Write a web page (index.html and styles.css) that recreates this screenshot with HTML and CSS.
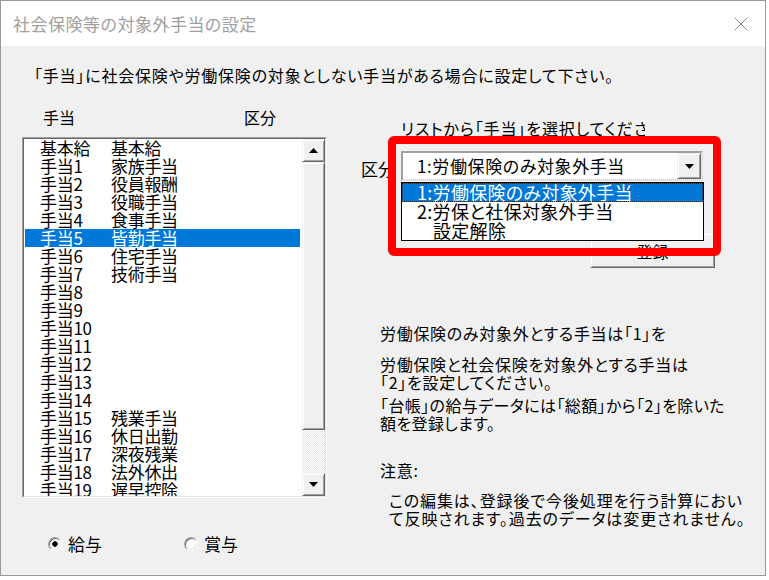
FILE: index.html
```html
<!DOCTYPE html>
<html lang="ja">

<head>
    <meta charset="UTF-8">
    <title>社会保険等の対象外手当の設定</title>
    <link rel="stylesheet" href="styles.css">
</head>

<body>

    <div class="window">
        <!-- Barra de título -->
        <div class="titlebar">
            <span class="title">社会保険等の対象外手当の設定</span>
            <svg class="close" width="16" height="16" viewBox="0 0 16 16">
                <path d="M1.5 1.5L14.5 14.5M14.5 1.5L1.5 14.5" stroke="#8a8a8a" stroke-width="1" fill="none" />
            </svg>
        </div>

        <div class="content">
            <p class="intro">「手当」に社会保険や労働保険の対象としない手当がある場合に設定して下さい。</p>

            <div class="main">
                <!-- Coluna esquerda: lista de 手当 -->
                <div class="left">
                    <div class="heads"><span class="head-1">手当</span><span>区分</span></div>
                    <div class="listbox">
                        <div class="listbox-inner">
                            <div class="items">
                                <div class="item"><span class="c1">基本給</span><span>基本給</span></div>
                                <div class="item"><span class="c1">手当1</span><span>家族手当</span></div>
                                <div class="item"><span class="c1">手当2</span><span>役員報酬</span></div>
                                <div class="item"><span class="c1">手当3</span><span>役職手当</span></div>
                                <div class="item"><span class="c1">手当4</span><span>食事手当</span></div>
                                <div class="item selected"><span class="c1">手当5</span><span>皆勤手当</span></div>
                                <div class="item"><span class="c1">手当6</span><span>住宅手当</span></div>
                                <div class="item"><span class="c1">手当7</span><span>技術手当</span></div>
                                <div class="item"><span class="c1">手当8</span></div>
                                <div class="item"><span class="c1">手当9</span></div>
                                <div class="item"><span class="c1">手当10</span></div>
                                <div class="item"><span class="c1">手当11</span></div>
                                <div class="item"><span class="c1">手当12</span></div>
                                <div class="item"><span class="c1">手当13</span></div>
                                <div class="item"><span class="c1">手当14</span></div>
                                <div class="item"><span class="c1">手当15</span><span>残業手当</span></div>
                                <div class="item"><span class="c1">手当16</span><span>休日出勤</span></div>
                                <div class="item"><span class="c1">手当17</span><span>深夜残業</span></div>
                                <div class="item"><span class="c1">手当18</span><span>法外休出</span></div>
                                <div class="item"><span class="c1">手当19</span><span>遅早控除</span></div>
                            </div>
                            <div class="scrollbar">
                                <div class="sb-btn">
                                    <svg width="9" height="5" viewBox="0 0 9 5"><path d="M4.5 0L9 5H0Z" fill="#000" /></svg>
                                </div>
                                <div class="sb-thumb"></div>
                                <div class="sb-track"></div>
                                <div class="sb-btn">
                                    <svg width="9" height="5" viewBox="0 0 9 5"><path d="M0 0H9L4.5 5Z" fill="#000" /></svg>
                                </div>
                            </div>
                        </div>
                    </div>
                    <div class="radios">
                        <label class="radio"><span class="dot checked"></span>給与</label>
                        <label class="radio"><span class="dot"></span>賞与</label>
                    </div>
                </div>

                <!-- Coluna direita: 区分 e notas -->
                <div class="right">
                    <p class="hint">リストから「手当」を選択してください。</p>
                    <div class="kubun">
                        <span class="kubun-label">区分</span>
                        <div class="combo">
                            <span class="combo-text">1:労働保険のみ対象外手当</span>
                            <div class="combo-btn">
                                <svg width="9" height="5" viewBox="0 0 9 5"><path d="M0 0H9L4.5 5Z" fill="#000" /></svg>
                            </div>
                            <ul class="dropdown">
                                <li class="selected">1:労働保険のみ対象外手当</li>
                                <li>2:労保と社保対象外手当</li>
                                <li class="indent">設定解除</li>
                            </ul>
                        </div>
                    </div>
                    <button class="register">登録</button>
                    <div class="notes">
                        <p>労働保険のみ対象外とする手当は「1」を</p>
                        <p class="gap-1">労働保険と社会保険を対象外とする手当は<br>「2」を設定してください。</p>
                        <p class="gap-2">「台帳」の給与データには「総額」から「2」を除いた<br>額を登録します。</p>
                        <p class="gap-3">注意:</p>
                        <p class="caution">この編集は、登録後で今後処理を行う計算におい<br>て反映されます。過去のデータは変更されません。</p>
                    </div>
                    <div class="highlight"></div>
                </div>
            </div>
        </div>
    </div>

</body>

</html>
```

FILE: styles.css
```css
body {
    margin: 0;
    background: #fff;
    font-family: "Noto Sans CJK JP", sans-serif;
    font-feature-settings: "palt";
    color: #000;
}

.window {
    width: 766px;
    height: 576px;
    box-sizing: border-box;
    border: 1px solid #9a9a9a;
    background: #f0f0f0;
    display: flex;
    flex-direction: column;
    overflow: hidden;
}

.titlebar {
    height: 45px;
    background: #fff;
    display: flex;
    align-items: center;
    justify-content: space-between;
    padding: 0 16px 0 12px;
    flex-shrink: 0;
}

.titlebar .title {
    font-size: 17px;
    color: #a0a0a0;
    letter-spacing: 0.5px;
}

.content {
    flex: 1;
}

.intro {
    margin: 19px 0 0 33px;
    font-size: 16px;
    line-height: 20px;
    letter-spacing: 0.8px;
    white-space: nowrap;
}

.main {
    display: flex;
    margin-top: 22px;
}

.left {
    margin-left: 21px;
    width: 305px;
}

.heads {
    display: flex;
    font-size: 16px;
    line-height: 20px;
    padding-left: 21px;
}

.heads .head-1 {
    width: 201px;
}

.listbox {
    margin-top: 10px;
    height: 361px;
    box-sizing: border-box;
    border: 1px solid;
    border-color: #a0a0a0 #fff #fff #a0a0a0;
}

.listbox-inner {
    height: 100%;
    box-sizing: border-box;
    border: 1px solid;
    border-color: #696969 #e3e3e3 #e3e3e3 #696969;
    display: flex;
    background: #fff;
}

.items {
    flex: 1;
    overflow: hidden;
    padding: 0 2px 0 1px;
}

.item {
    display: flex;
    height: 18px;
    line-height: 18px;
    font-size: 17px;
    padding-left: 15px;
    white-space: nowrap;
    letter-spacing: -0.3px;
}

.item .c1 {
    width: 71px;
}

.item.selected {
    background: #0078d7;
    color: #fff;
}

.scrollbar {
    width: 23px;
    display: flex;
    flex-direction: column;
    background: repeating-conic-gradient(#fff 0 25%, #e6e6e6 0 50%) 0 0 / 2px 2px;
}

.sb-btn,
.sb-thumb,
.combo-btn,
.register {
    background: #f0f0f0;
    box-sizing: border-box;
    border: 1px solid;
    border-color: #f0f0f0 #696969 #696969 #f0f0f0;
    box-shadow: inset 1px 1px #fff, inset -1px -1px #a0a0a0;
}

.sb-btn {
    height: 23px;
    display: flex;
    align-items: center;
    justify-content: center;
}

.sb-thumb {
    height: 268px;
}

.sb-track {
    flex: 1;
}

.radios {
    display: flex;
    margin-top: 36px;
    padding-left: 26px;
    font-size: 17px;
    line-height: 20px;
}

.radio {
    display: flex;
    align-items: center;
    gap: 6px;
    width: 136px;
}

.radio .dot {
    width: 14px;
    height: 14px;
    box-sizing: border-box;
    border-radius: 50%;
    border: 1px solid;
    border-color: #a0a0a0 #fff #fff #a0a0a0;
    box-shadow: inset 1px 1px #696969, inset -1px -1px #e3e3e3;
    background: #fff;
}

.radio .dot.checked {
    background: radial-gradient(circle, #000 0 2.5px, #fff 3px);
}

.right {
    flex: 1;
    position: relative;
}

.hint {
    margin: 11px 0 0 74px;
    width: 244px;
    overflow: hidden;
    white-space: nowrap;
    font-size: 16px;
    line-height: 20px;
    letter-spacing: 0.9px;
}

.kubun {
    display: flex;
    margin-top: 13px;
    margin-left: 34px;
}

.kubun-label {
    width: 40px;
    font-size: 17px;
    line-height: 30px;
    padding-top: 3px;
}

.combo {
    position: relative;
    width: 302px;
    height: 30px;
    box-sizing: border-box;
    border: 2px solid;
    border-color: #a0a0a0 #e3e3e3 #e3e3e3 #a0a0a0;
    background: #fff;
    display: flex;
    align-items: center;
    justify-content: space-between;
}

.combo-text {
    font-size: 17px;
    line-height: 20px;
    padding-left: 14px;
    letter-spacing: 0.6px;
}

.combo-btn {
    width: 24px;
    height: 26px;
    display: flex;
    align-items: center;
    justify-content: center;
}

.dropdown {
    position: absolute;
    top: 29px;
    left: -2px;
    width: 303px;
    box-sizing: border-box;
    margin: 0;
    padding: 0;
    list-style: none;
    border: 1px solid #000;
    background: #fff;
    font-size: 18px;
    z-index: 2;
}

.dropdown li {
    height: 19px;
    line-height: 19px;
    padding-left: 15px;
    letter-spacing: 0.3px;
}

.dropdown li.selected {
    background: #0078d7;
    color: #fff;
    outline: 1px dotted #222;
    outline-offset: -1px;
}

.dropdown li.indent {
    padding-left: 31px;
}

.register {
    display: block;
    margin: 49px 0 0 263px;
    width: 125px;
    height: 35px;
    padding: 0;
    font-family: inherit;
    font-size: 16px;
    color: #000;
}

.notes {
    margin: 56px 0 0 53px;
    font-size: 16px;
    line-height: 18px;
    letter-spacing: 0.7px;
    white-space: nowrap;
}

.notes p {
    margin: 0;
}

.notes .gap-1 {
    margin-top: 13px;
}

.notes .gap-2 {
    margin-top: 5px;
    letter-spacing: 0.4px;
}

.notes .gap-3 {
    margin-top: 29px;
}

.notes .caution {
    margin: 12px 0 0 9px;
    letter-spacing: 0.9px;
}

/* Moldura vermelha de destaque */
.highlight {
    position: absolute;
    left: 61px;
    top: 29px;
    width: 333px;
    height: 120px;
    box-sizing: border-box;
    border: 8px solid #ff0000;
    border-radius: 6px;
    z-index: 3;
}
```
